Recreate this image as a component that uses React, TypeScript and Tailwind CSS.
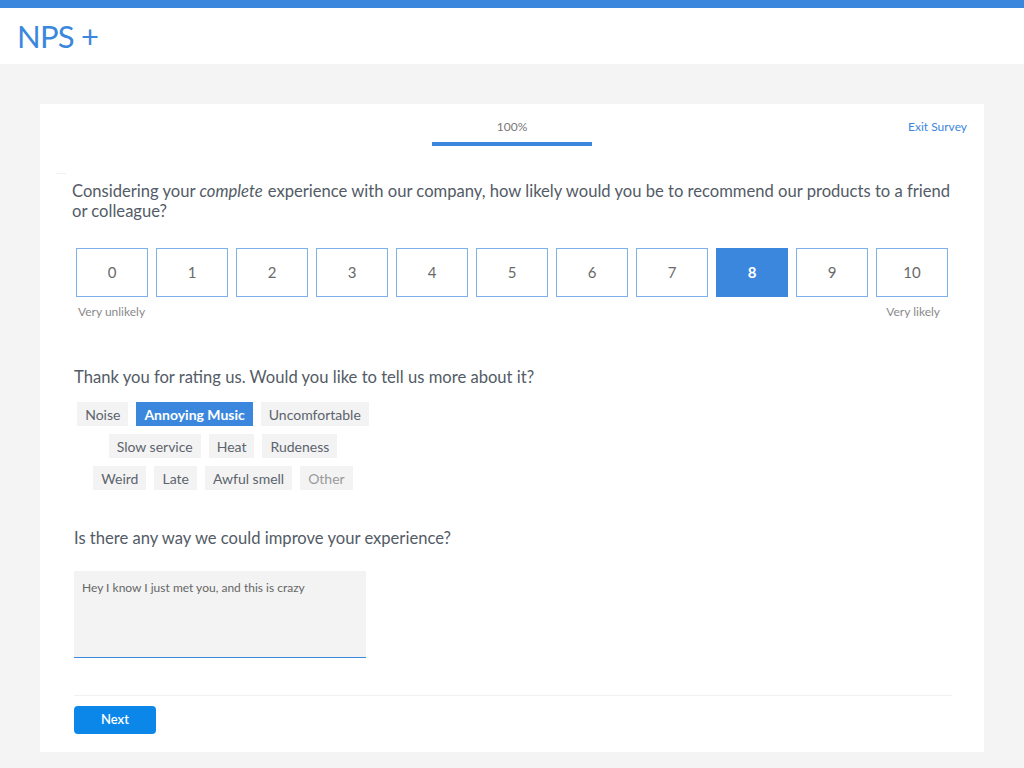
import React, { useState } from "react";

const scores = [0, 1, 2, 3, 4, 5, 6, 7, 8, 9, 10];

const tagRows = [
  ["Noise", "Annoying Music", "Uncomfortable"],
  ["Slow service", "Heat", "Rudeness"],
  ["Weird", "Late", "Awful smell", "Other"],
];

export default function App() {
  const [score, setScore] = useState(8);
  const [tags, setTags] = useState<string[]>(["Annoying Music"]);
  const [comment, setComment] = useState("Hey I know I just met you, and this is crazy");

  const toggleTag = (t: string) => {
    setTags((prev) => (prev.includes(t) ? prev.filter((x) => x !== t) : [...prev, t]));
  };

  return (
    <div className="min-h-screen bg-[#f4f4f4] text-[#535b66]" style={{ fontFamily: "Lato, 'Open Sans', sans-serif" }}>
      <div className="h-2 bg-[#3b87dd]" />
      <header className="h-14 bg-white flex items-center px-[17px]">
        <span className="text-[31px] text-[#3b87dd] leading-none tracking-tight">NPS +</span>
      </header>

      <div className="px-10 pt-10 pb-4">
        <div className="bg-white h-[648px] flex flex-col">
          {/* top bar */}
          <div className="relative h-[70px]">
            <div className="absolute left-1/2 -translate-x-1/2 top-[17px] flex flex-col items-center">
              <span className="text-[12px] text-[#777] leading-none">100%</span>
              <div className="mt-[9px] w-40 h-1 bg-[#3b87dd]" />
            </div>
            <a href="#" className="absolute right-[17px] top-[17px] text-[12px] leading-none text-[#3b87dd]">
              Exit Survey
            </a>
            <div className="absolute left-4 top-[69px] w-2.5 h-px bg-[#f1f1f1]" />
          </div>

          <div className="pl-8 pr-8">
            <p className="text-[16.6px] leading-5 mt-[7px]">
              Considering your <em className="pr-px">complete</em> experience with our company, how likely would you be to recommend our products to a friend or colleague?
            </p>

            <div className="mt-[27px] pl-1 flex gap-2">
              {scores.map((s) => (
                <button
                  key={s}
                  onClick={() => setScore(s)}
                  className={
                    s === score
                      ? "w-[72px] h-[49px] border border-[#3b87dd] bg-[#3b87dd] text-white font-bold text-[15px]"
                      : "w-[72px] h-[49px] border border-[#7eb0ea] bg-white text-[#6a6a6a] text-[15px]"
                  }
                >
                  {s}
                </button>
              ))}
            </div>
            <div className="mt-[7px] pl-1.5 pr-2 w-[876px] flex justify-between text-[12px] text-[#8a8a8a] leading-4">
              <span>Very unlikely</span>
              <span>Very likely</span>
            </div>

            <p className="mt-[47px] ml-0.5 text-[16.6px] leading-5">
              Thank you for rating us. Would you like to tell us more about it?
            </p>

            <div className="mt-[15px] ml-0.5 w-[298px] flex flex-col gap-2">
              {tagRows.map((row, i) => (
                <div key={i} className="flex justify-center gap-2">
                  {row.map((t) => (
                    <button
                      key={t}
                      onClick={() => toggleTag(t)}
                      className={
                        tags.includes(t)
                          ? "h-6 px-2 bg-[#3b87dd] text-white font-bold text-[14px]"
                          : t === "Other"
                          ? "h-6 px-2 bg-[#f3f3f3] text-[#9a9a9a] text-[14px]"
                          : "h-6 px-2 bg-[#f3f3f3] text-[#5c636d] text-[14px]"
                      }
                    >
                      {t}
                    </button>
                  ))}
                </div>
              ))}
            </div>

            <p className="mt-[38px] ml-0.5 text-[16.6px] leading-5">Is there any way we could improve your experience?</p>

            <textarea
              value={comment}
              onChange={(e) => setComment(e.target.value)}
              className="mt-[23px] ml-0.5 block w-[292px] h-[87px] bg-[#f3f3f3] border-b border-[#3b87dd] px-2 py-2 text-[12px] text-[#666] resize-none outline-none"
            />

            <div className="mt-[37px] ml-0.5 h-px bg-[#f1f1f1]" />

            <button className="mt-[10px] ml-0.5 w-[82px] h-7 rounded-sm bg-[#0b87e9] text-white text-[13px] font-semibold">
              Next
            </button>
          </div>
        </div>
      </div>
    </div>
  );
}
